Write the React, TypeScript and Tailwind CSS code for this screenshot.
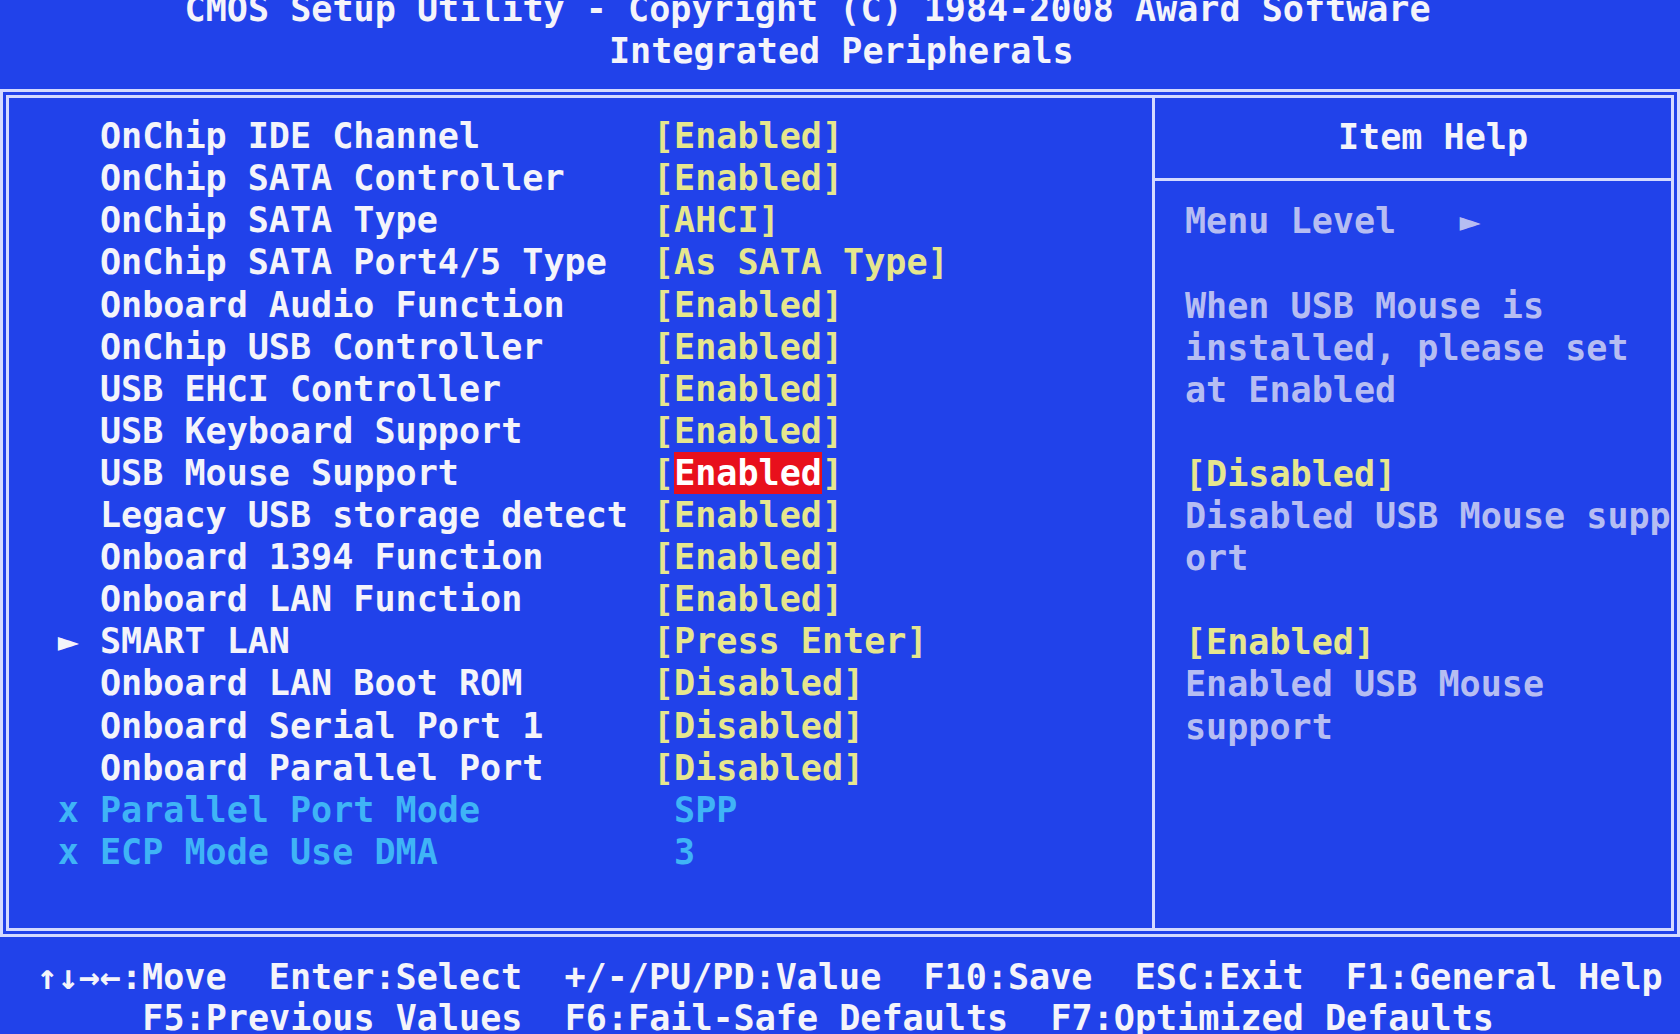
import React from "react";

type Row = {
  prefix?: string;
  label: string;
  value: string;
  selected?: boolean;
  disabled?: boolean;
};

const rows: Row[] = [
  { label: "OnChip IDE Channel", value: "[Enabled]" },
  { label: "OnChip SATA Controller", value: "[Enabled]" },
  { label: "OnChip SATA Type", value: "[AHCI]" },
  { label: "OnChip SATA Port4/5 Type", value: "[As SATA Type]" },
  { label: "Onboard Audio Function", value: "[Enabled]" },
  { label: "OnChip USB Controller", value: "[Enabled]" },
  { label: "USB EHCI Controller", value: "[Enabled]" },
  { label: "USB Keyboard Support", value: "[Enabled]" },
  { label: "USB Mouse Support", value: "[Enabled]", selected: true },
  { label: "Legacy USB storage detect", value: "[Enabled]" },
  { label: "Onboard 1394 Function", value: "[Enabled]" },
  { label: "Onboard LAN Function", value: "[Enabled]" },
  { prefix: "►", label: "SMART LAN", value: "[Press Enter]" },
  { label: "Onboard LAN Boot ROM", value: "[Disabled]" },
  { label: "Onboard Serial Port 1", value: "[Disabled]" },
  { label: "Onboard Parallel Port", value: "[Disabled]" },
  { prefix: "x", label: "Parallel Port Mode", value: " SPP", disabled: true },
  { prefix: "x", label: "ECP Mode Use DMA", value: " 3", disabled: true },
];

type HelpLine = { text: string; yellow?: boolean };

const help: HelpLine[] = [
  { text: "Menu Level   ►" },
  { text: "" },
  { text: "When USB Mouse is" },
  { text: "installed, please set" },
  { text: "at Enabled" },
  { text: "" },
  { text: "[Disabled]", yellow: true },
  { text: "Disabled USB Mouse supp" },
  { text: "ort" },
  { text: "" },
  { text: "[Enabled]", yellow: true },
  { text: "Enabled USB Mouse" },
  { text: "support" },
];

export default function App() {
  return (
    <div className="w-[1680px] h-[1034px] overflow-hidden bg-[#2142ea] font-['DejaVu_Sans_Mono','Liberation_Mono',monospace] font-bold text-[35.1px] leading-[42.1px] whitespace-pre text-[#f4f4fa]">
      {/* Header */}
      <div className="-mt-[12px] flex flex-col">
        <div className="h-[42.1px] pl-[184.6px]">
          CMOS Setup Utility - Copyright (C) 1984-2008 Award Software
        </div>
        <div className="h-[42.1px] pl-[609px]">Integrated Peripherals</div>
      </div>

      {/* Main frame */}
      <div className="mt-[17px] h-[848px] border-[9px] border-double border-[#d4daff] flex">
        {/* Left list */}
        <div className="w-[1143px] pt-[17px] pl-[48.7px] flex flex-col">
          {rows.map((r, i) => (
            <div key={i} className="flex h-[42.1px]">
              <div
                className={
                  "w-[2ch] " + (r.disabled ? "text-[#3fb4f6]" : "text-[#f4f4fa]")
                }
              >
                {r.prefix ?? ""}
              </div>
              <div
                className={
                  "w-[calc(26ch+4px)] " +
                  (r.disabled ? "text-[#3fb4f6]" : "text-[#f4f4fa]")
                }
              >
                {r.label}
              </div>
              <div className={r.disabled ? "text-[#3fb4f6]" : "text-[#e6e68e]"}>
                {r.selected ? (
                  <>
                    [
                    <span className="inline-block h-[42.1px] bg-[#e8101c] text-white">
                      Enabled
                    </span>
                    ]
                  </>
                ) : (
                  r.value
                )}
              </div>
            </div>
          ))}
        </div>

        {/* Separator */}
        <div className="w-[3px] bg-[#d4daff]" />

        {/* Help panel */}
        <div className="flex-1 pt-[18px] flex flex-col">
          <div className="h-[42.1px] pl-[183px] text-[#f4f4fa]">Item Help</div>
          <div className="h-[42.1px] flex items-center">
            <div className="h-[3px] w-full bg-[#d4daff]" />
          </div>
          <div className="pl-[30px] flex flex-col">
            {help.map((h, i) => (
              <div
                key={i}
                className={
                  "h-[42.1px] " + (h.yellow ? "text-[#e6e68e]" : "text-[#b6bdf2]")
                }
              >
                {h.text}
              </div>
            ))}
          </div>
        </div>
      </div>

      {/* Footer */}
      <div className="mt-[19px] flex flex-col">
        <div className="h-[41px] pl-[36.5px]">
          ↑↓→←:Move  Enter:Select  +/-/PU/PD:Value  F10:Save  ESC:Exit  F1:General Help
        </div>
        <div className="h-[41px] pl-[142.3px]">
          F5:Previous Values  F6:Fail-Safe Defaults  F7:Optimized Defaults
        </div>
      </div>
    </div>
  );
}
